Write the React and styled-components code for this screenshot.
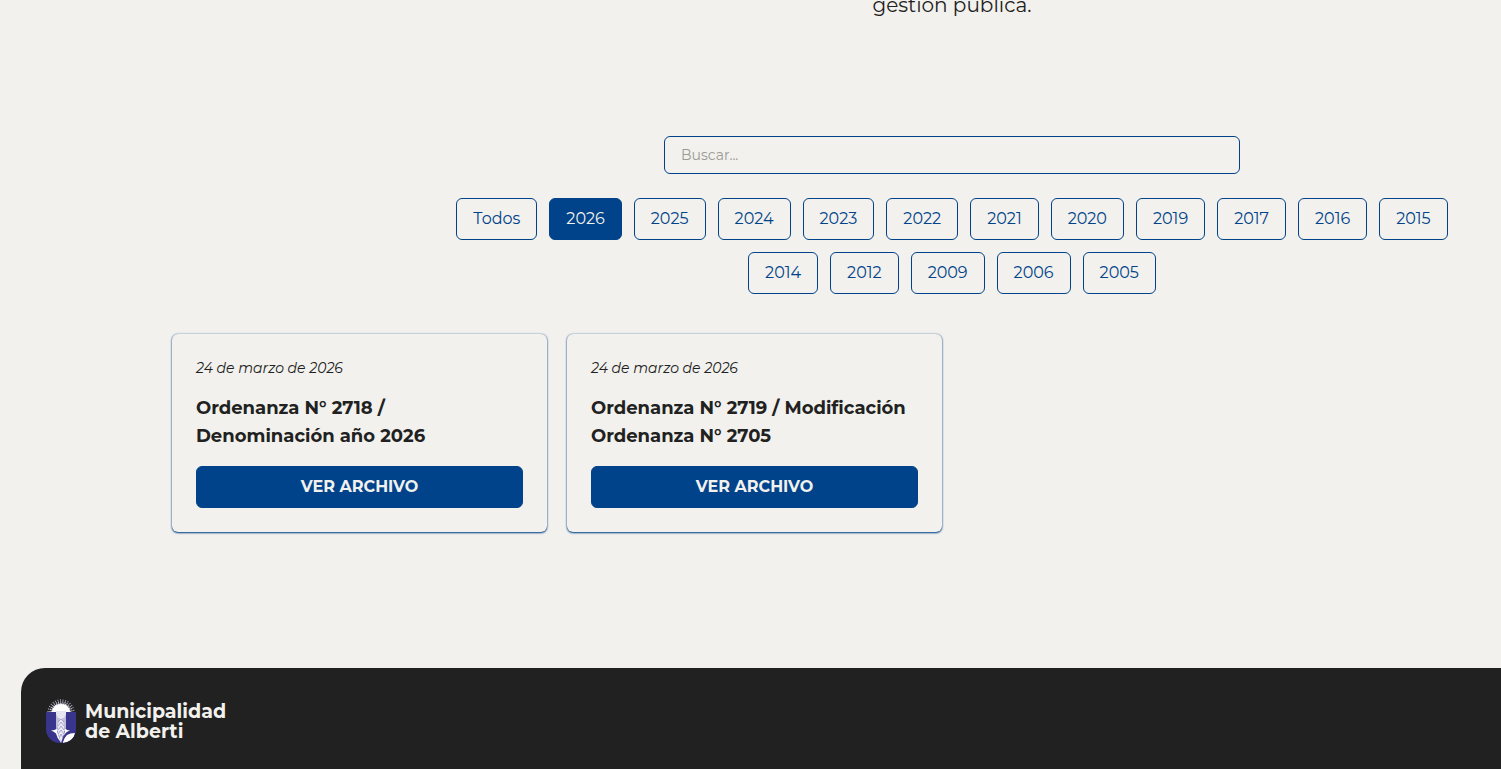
import React, { useState } from "react";
import styled, { createGlobalStyle } from "styled-components";

const theme = {
  color: {
    primary: "#00438a",
    background: "#f2f1ed",
    dark: "#212121",
    placeholder: "#9b9b96",
  },
  radius: "6px",
};

const years = [
  "2026",
  "2025",
  "2024",
  "2023",
  "2022",
  "2021",
  "2020",
  "2019",
  "2017",
  "2016",
  "2015",
  "2014",
  "2012",
  "2009",
  "2006",
  "2005",
];

const ordinances = [
  {
    date: "24 de marzo de 2026",
    dateTime: "2026-03-24",
    year: "2026",
    title: "Ordenanza N° 2718 / Denominación año 2026",
  },
  {
    date: "24 de marzo de 2026",
    dateTime: "2026-03-24",
    year: "2026",
    title: "Ordenanza N° 2719 / Modificación Ordenanza N° 2705",
  },
];

const Logo = () => {
  return (
    <LogoImage viewBox="0 0 30 44" aria-hidden="true">
      <defs>
        <clipPath id="capsule">
          <rect width="30" height="44" rx="14" />
        </clipPath>
      </defs>
      <g clipPath="url(#capsule)">
        <g fill="none" stroke="#dddcf0">
          <circle
            cx="15"
            cy="14"
            r="13"
            strokeWidth="1.4"
            strokeDasharray="1 1.6"
            opacity="0.7"
          />
          <circle
            cx="15"
            cy="14"
            r="11"
            strokeWidth="1.6"
            strokeDasharray="1.1 1.1"
            opacity="0.85"
          />
          <circle
            cx="15"
            cy="14"
            r="9"
            strokeWidth="2"
            strokeDasharray="1.2 0.5"
          />
        </g>
        <path d="M6 13a9 8 0 0 1 18 0z" fill="#fff" />
        <rect y="13" width="30" height="31" fill="#3a358c" />
        <path d="M10 12h10v16l-1 4h-8l-1-4z" fill="#bebcd9" />
        <path d="M10 12h10v3l-2 4h-6l-2-4z" fill="#e6e5f1" />
        <path d="M15 17l3 8v10l-3 9-3-9V25z" fill="#eceaf5" />
        <path
          d="M12 23l3-3 3 3M12 27l3-4 3 4M12 31l3-4 3 4M12 35l3-4 3 4M13 39l2-4 2 4"
          fill="none"
          stroke="#9491c0"
          strokeWidth="0.8"
        />
        <path d="M5 31.500q4 0 6-2l1 6 3 8q-4-4-5-9-2-2-5-3z" fill="#fff" />
        <path d="M19 29.500q2 2 5 2-4 1-6 5z" fill="#fff" />
        <path d="M17 43q1-4 4-7 3-2 8-2-1 8-12 10z" fill="#fff" />
      </g>
    </LogoImage>
  );
};

const App = () => {
  const [search, setSearch] = useState("");
  const [year, setYear] = useState("2026");

  const results = ordinances.filter(
    (item) =>
      (year === "Todos" || item.year === year) &&
      item.title.toLowerCase().includes(search.toLowerCase())
  );

  return (
    <Page>
      <GlobalStyle />
      <Main>
        <Finder>
          <Intro>gestión pública.</Intro>
          <SearchInput
            type="search"
            aria-label="Buscar"
            placeholder="Buscar..."
            value={search}
            onChange={(e) => setSearch(e.target.value)}
          />
          <Filters>
            {["Todos", ...years].map((item) => (
              <FilterButton
                key={item}
                type="button"
                $active={item === year}
                onClick={() => setYear(item)}
              >
                {item}
              </FilterButton>
            ))}
          </Filters>
        </Finder>

        <CardGrid>
          {results.map((item) => (
            <Card key={item.title}>
              <CardDate dateTime={item.dateTime}>{item.date}</CardDate>
              <CardTitle>{item.title}</CardTitle>
              <FileLink href="#archivo">VER ARCHIVO</FileLink>
            </Card>
          ))}
        </CardGrid>
      </Main>

      <Footer>
        <Logo />
        <Brand>
          Municipalidad
          <br />
          de Alberti
        </Brand>
      </Footer>
    </Page>
  );
};

export default App;

const GlobalStyle = createGlobalStyle`
  * {
    box-sizing: border-box;
  }

  body {
    margin: 0;
    color: ${theme.color.dark};
    background-color: ${theme.color.background};
    font-family: Montserrat, Inter, sans-serif;
  }

  button,
  input {
    font-family: inherit;
  }
`;

const Page = styled.div`
  display: flex;
  min-height: 100vh;
  flex-direction: column;
`;

const Main = styled.main`
  padding-bottom: 136px;
`;

const Finder = styled.section`
  display: flex;
  padding: 0 24px;
  margin-left: 403px;
  align-items: center;
  flex-direction: column;
`;

/* only the foot of the last line shows under the top edge */
const Intro = styled.p`
  height: 20px;
  display: flex;
  margin: 0 0 116px;
  overflow: hidden;
  align-items: flex-end;
  font-size: 20px;
  line-height: 30px;
`;

const SearchInput = styled.input`
  width: 100%;
  height: 38px;
  border: 1px solid ${theme.color.primary};
  padding: 0 16px;
  max-width: 576px;
  font-size: 14px;
  line-height: 20px;
  appearance: none;
  border-radius: ${theme.radius};
  background-color: transparent;

  &::placeholder {
    color: ${theme.color.placeholder};
  }
`;

const Filters = styled.div`
  gap: 12px;
  display: flex;
  flex-wrap: wrap;
  margin-top: 24px;
  justify-content: center;
`;

const FilterButton = styled.button`
  color: ${(props) =>
    props.$active ? theme.color.background : theme.color.primary};
  border: 1px solid ${theme.color.primary};
  cursor: pointer;
  padding: 8px 16px;
  font-size: 16px;
  line-height: 24px;
  border-radius: ${theme.radius};
  background-color: ${(props) =>
    props.$active ? theme.color.primary : "transparent"};
`;

const CardGrid = styled.section`
  gap: 20px;
  display: grid;
  padding: 0 24px 0 172px;
  margin-top: 40px;
  grid-template-columns: repeat(auto-fill, 375px);
`;

const Card = styled.article`
  gap: 16px;
  display: flex;
  padding: 24px;
  box-shadow: 0 0 2px rgba(0, 67, 138, 0.5), 0 1px 2px ${theme.color.primary};
  border-radius: ${theme.radius};
  flex-direction: column;
`;

const CardDate = styled.time`
  font-size: 14px;
  font-style: italic;
  line-height: 20px;
`;

const CardTitle = styled.h2`
  margin: 0;
  font-size: 18px;
  font-weight: 700;
  line-height: 28px;
`;

const FileLink = styled.a`
  color: ${theme.color.background};
  border: 1px solid ${theme.color.primary};
  padding: 8px 16px;
  font-size: 16px;
  text-align: center;
  font-weight: 700;
  line-height: 24px;
  border-radius: ${theme.radius};
  text-decoration: none;
  background-color: ${theme.color.primary};
`;

const Footer = styled.footer`
  gap: 9px;
  color: ${theme.color.background};
  display: flex;
  padding: 31px 25px 24px;
  flex-grow: 1;
  margin-left: 21px;
  align-items: flex-start;
  border-top-left-radius: 24px;
  background-color: ${theme.color.dark};
`;

const LogoImage = styled.svg`
  width: 30px;
  height: 44px;
`;

const Brand = styled.p`
  margin: 3px 0 0;
  font-size: 19px;
  font-weight: 700;
  line-height: 20px;
`;
